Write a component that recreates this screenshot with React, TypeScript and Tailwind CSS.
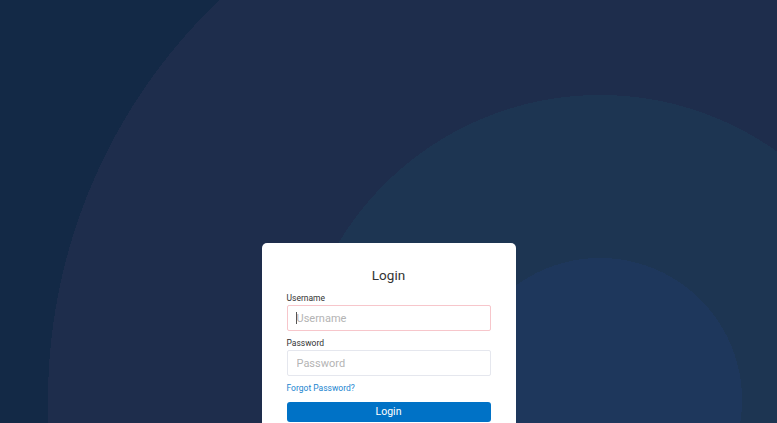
import React from "react";

export default function App() {
  return (
    <div
      className="h-[423px] w-full overflow-hidden bg-[radial-gradient(circle_at_600px_400px,#1e375c_0px,#1e375c_142px,#1d3552_142px,#1d3552_305px,#1e2d4c_305px,#1e2d4c_552px,#132946_552px)] pt-[243px] font-['Roboto',_'Liberation_Sans',_sans-serif]"
    >
      <div className="mx-auto w-[254px] rounded-[5px] bg-white px-[25px] pt-[24px] pb-[24px]">
        <h1 className="text-center text-[13.5px] leading-[16px] font-normal text-[#333333]">
          Login
        </h1>
        <label className="mt-[9px] block text-[8.5px] leading-[12px] font-normal text-[#333333]">
          Username
        </label>
        <div className="relative mt-[1px]">
          <input
            type="text"
            placeholder="Username"
            className="block h-[26px] w-full rounded-[2px] border border-[#f7c6cb] bg-white px-[9px] text-[11px] text-[#333] outline-none placeholder:text-[#b4b4b4]"
          />
          <span className="pointer-events-none absolute top-[7px] left-[9.5px] h-[12px] w-px bg-[#555]" />
        </div>
        <label className="mt-[6px] block text-[8.5px] leading-[12px] font-normal text-[#333333]">
          Password
        </label>
        <input
          type="password"
          placeholder="Password"
          className="mt-[1px] block h-[26px] w-full rounded-[2px] border border-[#e5e7ee] bg-white px-[9px] text-[11px] text-[#333] outline-none placeholder:text-[#b4b4b4]"
        />
        <a
          href="#"
          className="mt-[6px] block text-[8.5px] leading-[12px] text-[#2185d0]"
        >
          Forgot Password?
        </a>
        <button
          type="button"
          className="mt-[8px] flex h-[20px] w-full items-center justify-center rounded-[3px] bg-[#0072c6] text-[10.5px] text-white"
        >
          Login
        </button>
      </div>
    </div>
  );
}
